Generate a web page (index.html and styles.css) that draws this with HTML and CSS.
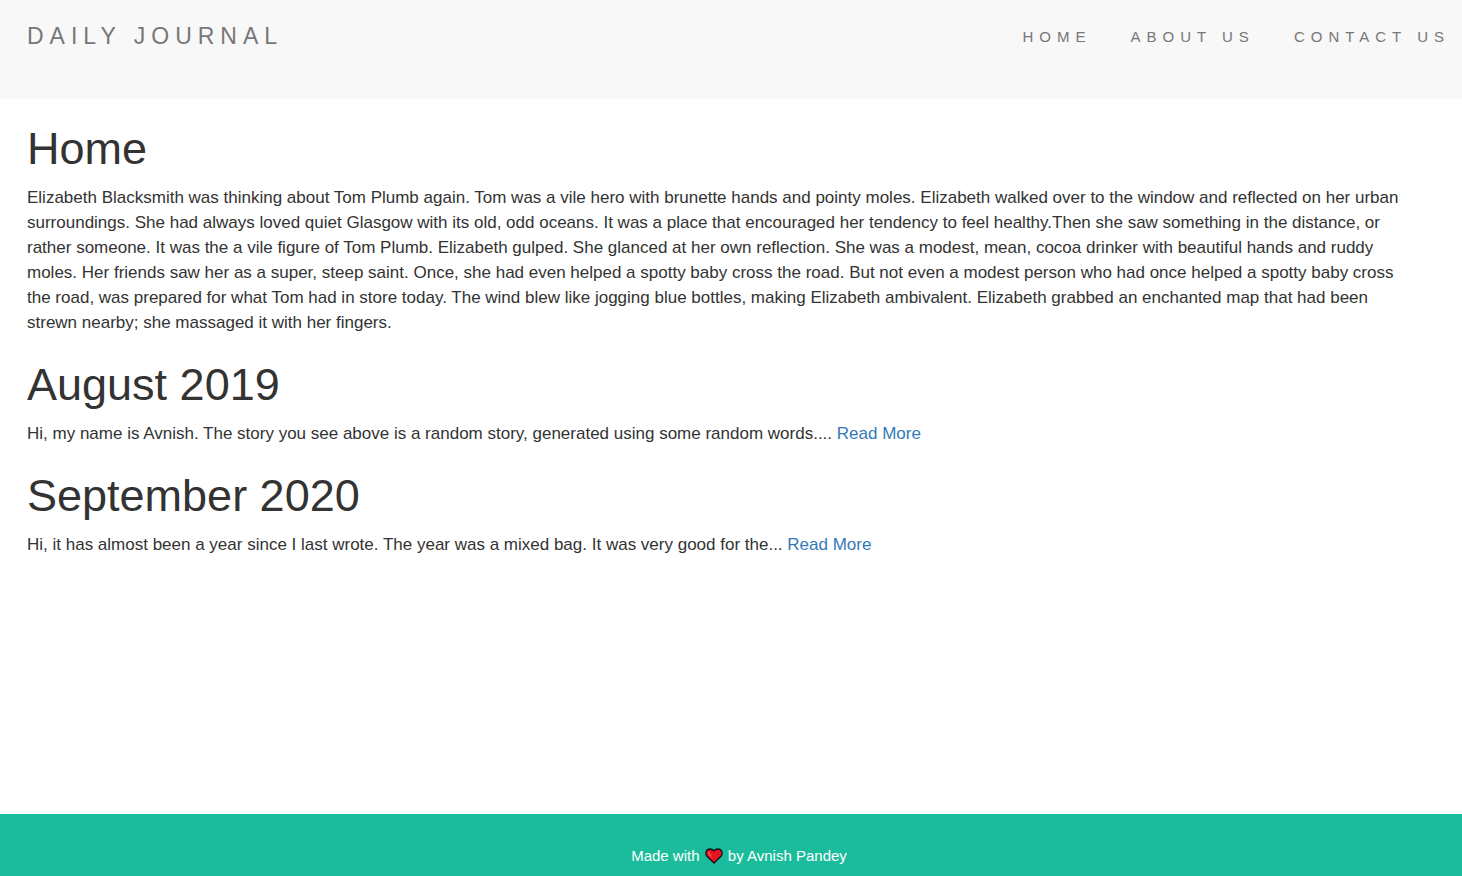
FILE: index.html
```html
<!DOCTYPE html>
<html lang="en">
<head>
<meta charset="utf-8">
<meta name="viewport" content="width=device-width, initial-scale=1">
<title>Daily Journal</title>
<link rel="stylesheet" href="styles.css">
</head>
<body>
<nav class="navbar">
  <a class="brand" href="#">DAILY JOURNAL</a>
  <ul class="nav-links">
    <li><a href="#">HOME</a></li>
    <li><a href="#">ABOUT US</a></li>
    <li><a href="#">CONTACT US</a></li>
  </ul>
</nav>
<main class="content">
  <section class="post">
    <h1>Home</h1>
    <p>Elizabeth Blacksmith was thinking about Tom Plumb again. Tom was a vile hero with brunette hands and pointy moles. Elizabeth walked over to the window and reflected on her urban surroundings. She had always loved quiet Glasgow with its old, odd oceans. It was a place that encouraged her tendency to feel healthy.Then she saw something in the distance, or rather someone. It was the a vile figure of Tom Plumb. Elizabeth gulped. She glanced at her own reflection. She was a modest, mean, cocoa drinker with beautiful hands and ruddy moles. Her friends saw her as a super, steep saint. Once, she had even helped a spotty baby cross the road. But not even a modest person who had once helped a spotty baby cross the road, was prepared for what Tom had in store today. The wind blew like jogging blue bottles, making Elizabeth ambivalent. Elizabeth grabbed an enchanted map that had been strewn nearby; she massaged it with her fingers.</p>
  </section>
  <section class="post">
    <h1>August 2019</h1>
    <p>Hi, my name is Avnish. The story you see above is a random story, generated using some random words.... <a href="#">Read More</a></p>
  </section>
  <section class="post">
    <h1>September 2020</h1>
    <p>Hi, it has almost been a year since I last wrote. The year was a mixed bag. It was very good for the... <a href="#">Read More</a></p>
  </section>
</main>
<footer class="footer">
  <p>Made with <svg class="heart" viewBox="0 0 18 16" role="img" aria-label="love"><path d="M9 15 L1.800 8 C0 5.500 1 1 5 1 C7 1 8.300 1.800 9 3 C9.700 1.800 11 1 13 1 C17 1 18 5.500 16.200 8 Z" fill="#e81224" stroke="#111" stroke-width="1.300" stroke-linejoin="round"/><path d="M3.800 4.200 Q4 6.500 6 8" fill="none" stroke="#f4694e" stroke-width="1.300" stroke-linecap="round"/></svg> by Avnish Pandey</p>
</footer>
</body>
</html>
```
FILE: styles.css
```css
* {
  box-sizing: border-box;
}

body {
  display: flex;
  flex-direction: column;
  min-height: 100vh;
  margin: 0;
  background: #fff;
  color: #333;
  font-family: "Liberation Sans", Arial, sans-serif;
  font-size: 17px;
  line-height: 25px;
}

a {
  color: #337ab7;
  text-decoration: none;
}

.navbar {
  display: flex;
  justify-content: space-between;
  padding: 24px 12px 50px 27px;
  background: #f8f8f8;
}

.navbar a {
  color: #777;
  letter-spacing: 6px;
}

.brand {
  font-size: 23px;
  line-height: 24px;
}

.nav-links {
  display: flex;
  gap: 39px;
  margin: 0;
  padding: 0;
  list-style: none;
  font-size: 15px;
}

.content {
  flex: 1;
  padding: 0 54px 0 27px;
}

.post h1 {
  margin: 25px 0 12px;
  font-size: 45px;
  font-weight: 400;
  line-height: 49px;
}

.post p {
  margin: 0;
}

.footer {
  padding: 30px 0 8px 16px;
  background: #1abc9c;
  color: #fff;
  font-size: 15px;
  line-height: 24px;
  text-align: center;
}

.footer p {
  margin: 0;
}

.heart {
  width: 18px;
  height: 16px;
  margin: 0 1px;
  vertical-align: -3px;
}
```
